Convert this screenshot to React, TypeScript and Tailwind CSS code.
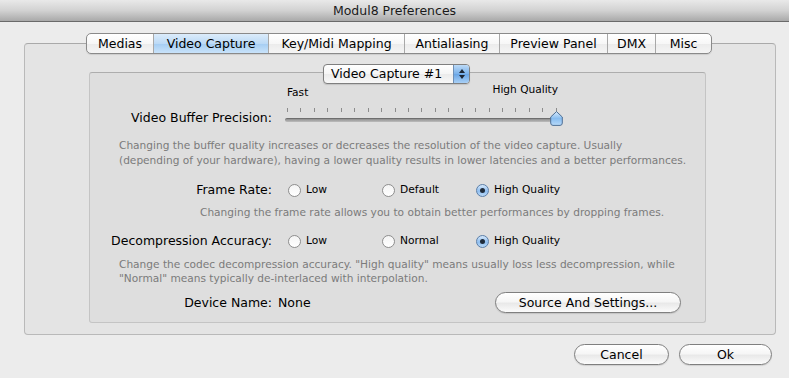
import React from "react";

const tabs: { label: string; w: string; active?: boolean }[] = [
  { label: "Medias", w: "w-[66px]" },
  { label: "Video Capture", w: "w-[115px]", active: true },
  { label: "Key/Midi Mapping", w: "w-[136px]" },
  { label: "Antialiasing", w: "w-[95px]" },
  { label: "Preview Panel", w: "w-[108px]" },
  { label: "DMX", w: "w-[48px]" },
  { label: "Misc", w: "w-[56px]" },
];

function Radio({ label, checked }: { label: string; checked?: boolean }) {
  return (
    <div className="flex w-[94px] items-center">
      <span
        className={
          checked
            ? "flex h-[13px] w-[13px] items-center justify-center rounded-full border border-[#5b7ea8] bg-[linear-gradient(to_bottom,#d6e8fa,#8fbef0_55%,#b9d9f7)]"
            : "flex h-[13px] w-[13px] items-center justify-center rounded-full border border-[#8e8e8e] bg-[linear-gradient(to_bottom,#f4f4f4,#ffffff)]"
        }
      >
        {checked && <span className="h-[5px] w-[5px] rounded-full bg-[#1f2b3a]" />}
      </span>
      <span className="ml-[5px] text-[10.7px] leading-[14px] text-black">{label}</span>
    </div>
  );
}

function Pill({ label, w }: { label: string; w: string }) {
  return (
    <div
      className={`${w} flex h-[21px] items-center justify-center rounded-full border border-[#7f7f7f] bg-[linear-gradient(to_bottom,#ffffff,#f6f6f6_45%,#e9e9e9_55%,#fbfbfb)] text-[12.5px] leading-[16px] text-black shadow-[0_1px_1px_rgba(0,0,0,0.12)]`}
    >
      {label}
    </div>
  );
}

export default function App() {
  const ticks = Array.from({ length: 21 }, (_, i) => i);
  return (
    <div className="h-[378px] w-[789px] overflow-hidden bg-[#ececec] font-['DejaVu_Sans',sans-serif] text-black">
      {/* title bar */}
      <div className="flex h-[22px] items-center justify-center border-b border-[#6a6a6a] bg-[linear-gradient(to_bottom,#e9e9e9,#d2d2d2_50%,#a9a9a9)]">
        <span className="text-[12.5px] leading-[16px] text-[#1a1a1a]">Modul8 Preferences</span>
      </div>

      {/* tab box */}
      <div className="ml-[24px] mt-[21px] w-[752px] rounded-[4px] border border-[#b9b9b9] border-t-[#a9a9a9] bg-[#e4e4e4] pb-[11px]">
        <div className="-mt-[11px] flex justify-center pr-[2px]">
          <div className="flex h-[21px] overflow-hidden rounded-[5px] border border-[#8a8a8a] bg-[linear-gradient(to_bottom,#ffffff,#f7f7f7_50%,#ebebeb_52%,#f5f5f5)] shadow-[0_1px_1px_rgba(0,0,0,0.1)]">
            {tabs.map((t, i) => (
              <div
                key={t.label}
                className={`${t.w} flex items-center justify-center text-[12.5px] leading-[16px] ${
                  i > 0 ? "border-l border-[#a8a8a8]" : ""
                } ${
                  t.active
                    ? "bg-[linear-gradient(to_bottom,#dcecfb,#bcdaf6_50%,#a5cdf3_52%,#c9e3fa)]"
                    : ""
                }`}
              >
                {t.label}
              </div>
            ))}
          </div>
        </div>

        {/* inner panel */}
        <div className="ml-[64px] mt-[18px] w-[617px] rounded-[3px] border border-[#c4c4c4] border-t-[#adadad] bg-[#dedede] pb-[9px]">
          <div className="-mt-[9px] flex justify-center pr-[2px]">
            <div className="flex h-[20px] w-[147px] overflow-hidden rounded-[4px] border border-[#7f7f7f] bg-[linear-gradient(to_bottom,#ffffff,#f5f5f5_50%,#ebebeb_52%,#f8f8f8)] shadow-[0_1px_1px_rgba(0,0,0,0.12)]">
              <div className="flex flex-1 items-center pl-[7px] text-[12.5px] leading-[16px]">Video Capture #1</div>
              <div className="flex w-[16px] flex-col items-center justify-center gap-[2px] border-l border-[#6f8fb5] bg-[linear-gradient(to_bottom,#bcdaf7,#78b0ea_50%,#6aa6e6_52%,#a9d0f6)]">
                <svg width="6" height="4" viewBox="0 0 6 4">
                  <path d="M3 0 L6 4 L0 4 Z" fill="#1d2633" />
                </svg>
                <svg width="6" height="4" viewBox="0 0 6 4">
                  <path d="M0 0 L6 0 L3 4 Z" fill="#1d2633" />
                </svg>
              </div>
            </div>
          </div>

          {/* slider row */}
          <div className="-mt-[2px] flex">
            <div className="w-[182px] pt-[28px] text-right text-[12.5px] leading-[16px]">Video Buffer Precision:</div>
            <div className="ml-[13px] w-[280px]">
              <div className="flex h-[17px] items-end justify-between pl-[2px] pr-[7px] text-[10.6px] leading-[14px]">
                <span>Fast</span>
                <span className="mb-[3px]">High Quality</span>
              </div>
              <div className="mt-[9px] flex h-[4px] w-[272px] justify-between pl-[2px]">
                {ticks.map((i) => (
                  <span key={i} className="h-[4px] w-px bg-[#8c8c8c]" />
                ))}
              </div>
              <div className="relative mt-[6px] h-[4px] w-[272px] rounded-full border-t border-[#6e6e6e] bg-[linear-gradient(to_bottom,#8e8e8e,#bdbdbd)]">
                <svg
                  className="absolute -top-[8px] left-[265px]"
                  width="13"
                  height="15"
                  viewBox="0 0 13 15"
                >
                  <defs>
                    <linearGradient id="th" x1="0" y1="0" x2="0" y2="1">
                      <stop offset="0" stopColor="#d9ebfc" />
                      <stop offset="0.5" stopColor="#88bdf0" />
                      <stop offset="1" stopColor="#b8daf9" />
                    </linearGradient>
                  </defs>
                  <path
                    d="M6.5 0.6 L12.3 6 L12.3 12 Q12.3 14.4 10 14.4 L3 14.4 Q0.7 14.4 0.7 12 L0.7 6 Z"
                    fill="url(#th)"
                    stroke="#4f6f95"
                    strokeWidth="1"
                  />
                </svg>
              </div>
            </div>
          </div>

          <p className="mt-[12px] pl-[29px] text-[10.6px] leading-[15px] text-[#7b7b7b]">
            Changing the buffer quality increases or decreases the resolution of the video capture. Usually
            <br />
            (depending of your hardware), having a lower quality results in lower latencies and a better performances.
          </p>

          <div className="mt-[14px] flex h-[16px] items-center">
            <div className="w-[182px] text-right text-[12.5px] leading-[16px]">Frame Rate:</div>
            <div className="ml-[16px] flex">
              <Radio label="Low" />
              <Radio label="Default" />
              <Radio label="High Quality" checked />
            </div>
          </div>

          <p className="mt-[7px] pl-[110px] text-[10.6px] leading-[15px] text-[#7b7b7b]">
            Changing the frame rate allows you to obtain better performances by dropping frames.
          </p>

          <div className="mt-[13px] flex h-[16px] items-center">
            <div className="w-[182px] text-right text-[12.5px] leading-[16px]">Decompression Accuracy:</div>
            <div className="ml-[16px] flex">
              <Radio label="Low" />
              <Radio label="Normal" />
              <Radio label="High Quality" checked />
            </div>
          </div>

          <p className="mt-[8px] pl-[29px] text-[10.6px] leading-[14px] text-[#7b7b7b]">
            Change the codec decompression accuracy. "High quality" means usually loss less decompression, while
            <br />
            "Normal" means typically de-interlaced with interpolation.
          </p>

          <div className="mt-[7px] flex h-[21px] items-center text-[12.5px] leading-[16px]">
            <div className="w-[182px] text-right">Device Name:</div>
            <div className="ml-[6px]">None</div>
            <div className="ml-auto mr-[24px]">
              <Pill label="Source And Settings..." w="w-[186px]" />
            </div>
          </div>
        </div>
      </div>

      <div className="mt-[9px] flex justify-end gap-[10px] pr-[17px]">
        <Pill label="Cancel" w="w-[95px]" />
        <Pill label="Ok" w="w-[93px]" />
      </div>
    </div>
  );
}
